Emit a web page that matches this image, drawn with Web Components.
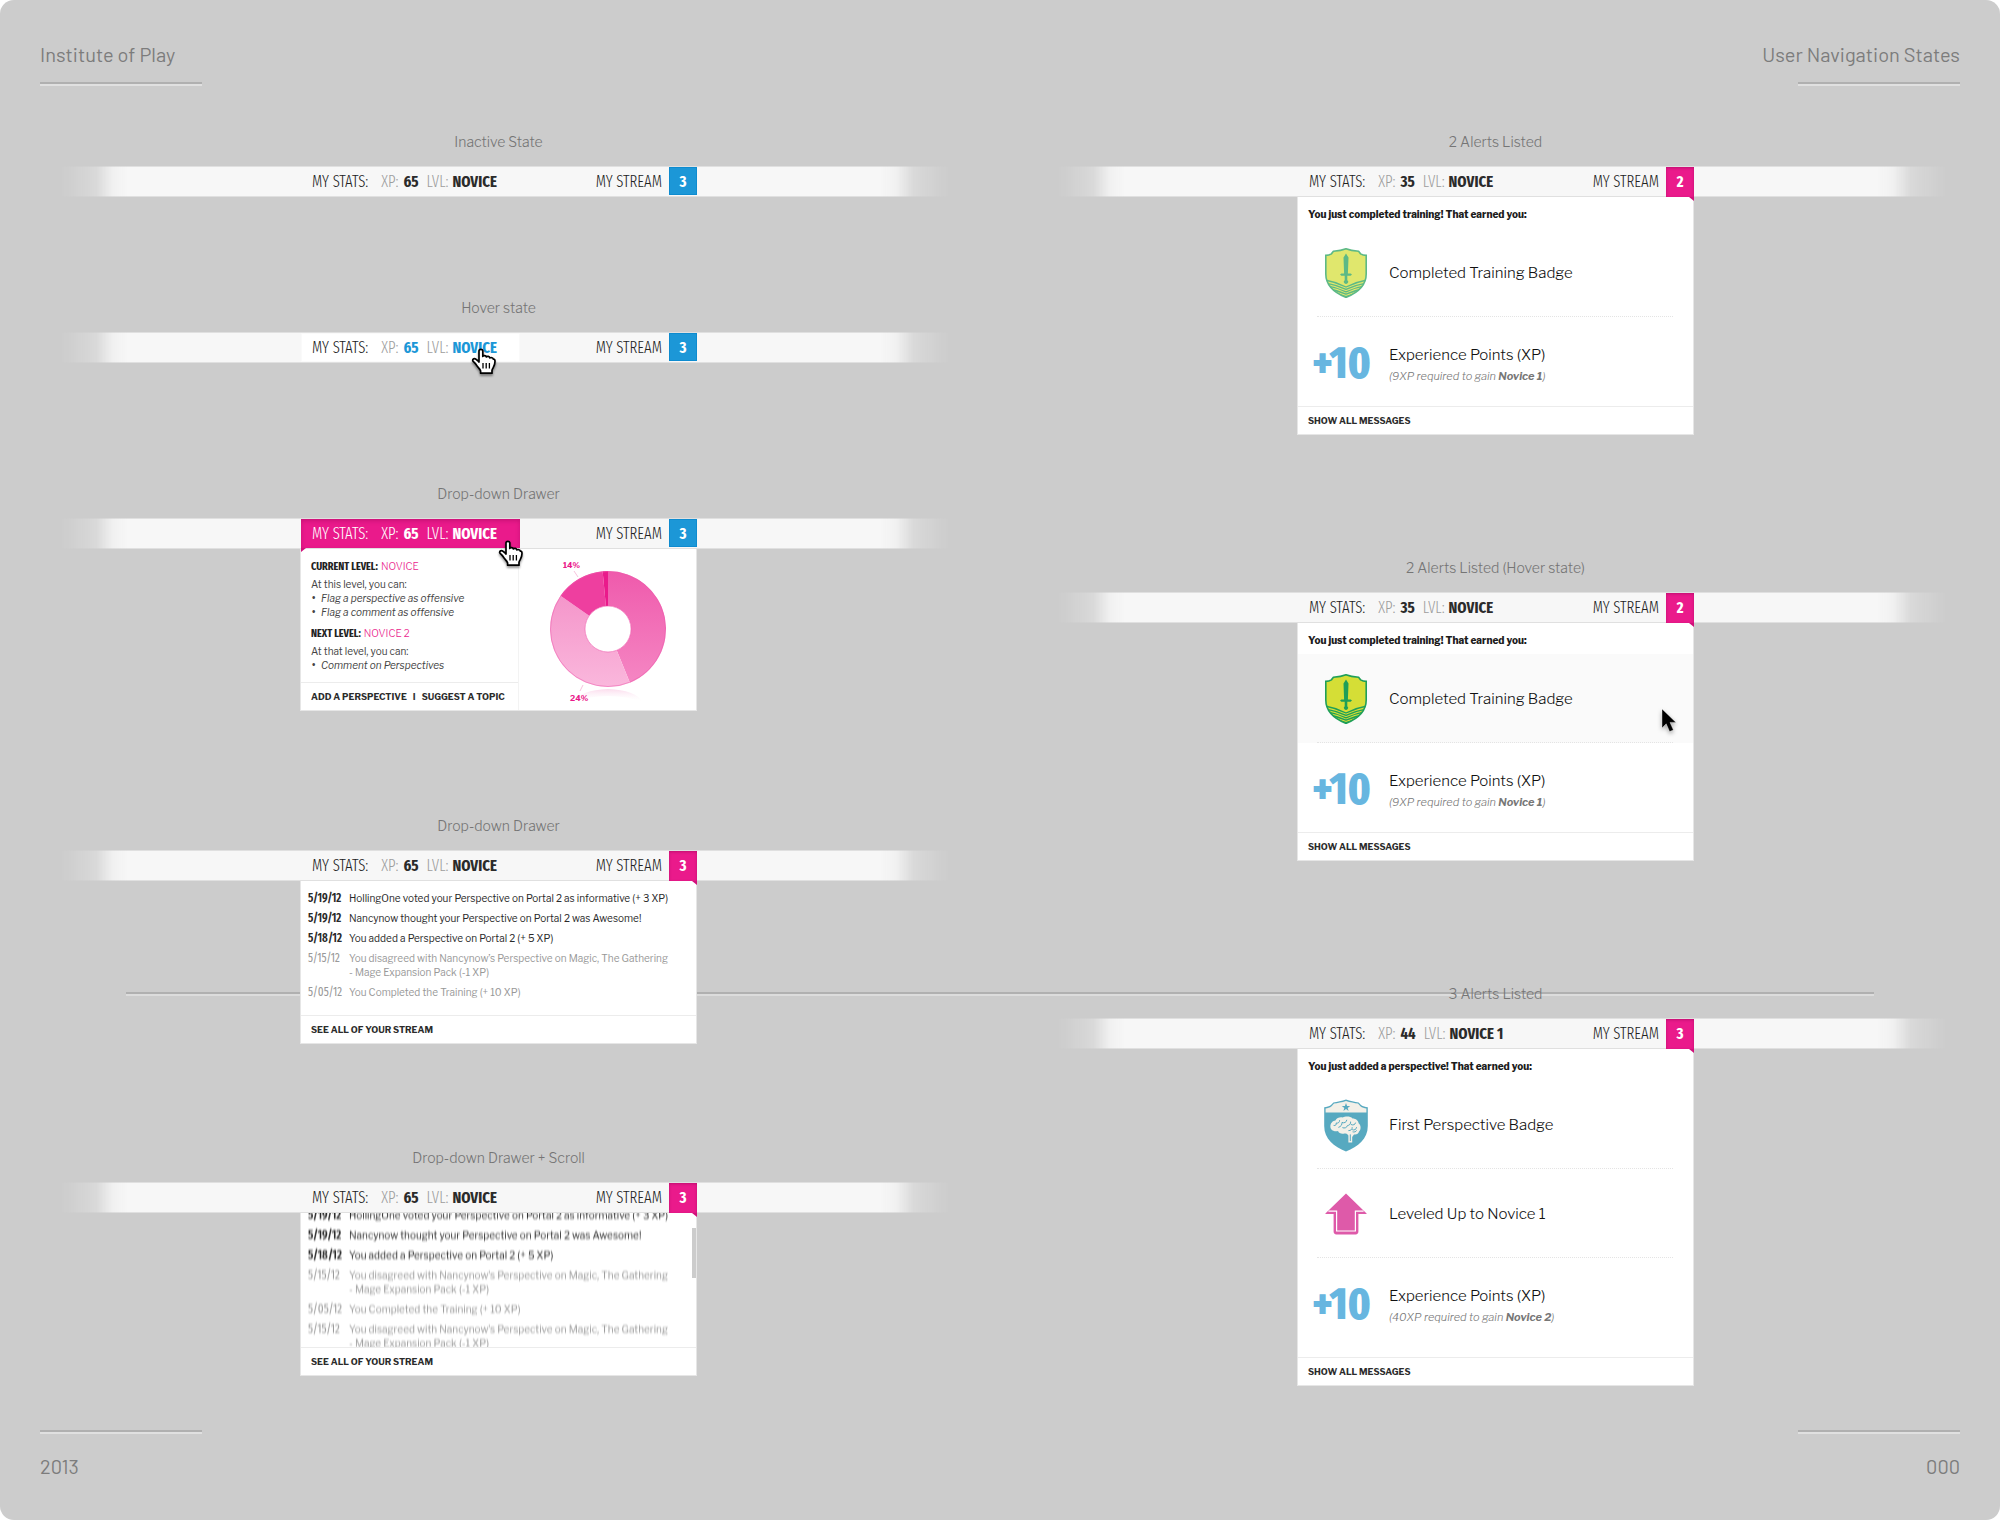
<!DOCTYPE html>
<html lang="en">
<head>
<meta charset="utf-8">
<meta name="viewport" content="width=device-width, initial-scale=1">
<title>User Navigation States</title>
<style>
  html { background: #fff; }
  body {
    margin: 0;
    --body-font: "Libre Franklin", "Liberation Sans", sans-serif;
    --narrow-font: "Fira Sans Extra Condensed", "Open Sans Condensed", "Liberation Sans", sans-serif;
    --din-font: Barlow, Roboto, sans-serif;
    --pink: #ea1a8b;
    --blue: #1c97d7;
    font-family: var(--body-font);
    color: #333;
  }
  b { font-weight: 700; }
</style>
</head>
<body>
<spec-sheet>
  <span slot="project">Institute of Play</span>
  <span slot="title">User Navigation States</span>
  <span slot="year">2013</span>
  <span slot="page">000</span>

  <state-column slot="left" style="--rows: 166px 186px 332px 332px auto">
    <nav-state label="Inactive State">
      <user-nav xp="65" level="NOVICE" count="3"></user-nav>
    </nav-state>
    <nav-state label="Hover state">
      <user-nav xp="65" level="NOVICE" count="3" stats="hover"></user-nav>
    </nav-state>
    <nav-state label="Drop-down Drawer">
      <user-nav xp="65" level="NOVICE" count="3" stats="open"></user-nav>
      <stats-drawer slot="drawer"></stats-drawer>
    </nav-state>
    <nav-state label="Drop-down Drawer">
      <user-nav xp="65" level="NOVICE" count="3" stream="open"></user-nav>
      <nav-drawer slot="drawer" action="SEE ALL OF YOUR STREAM">
        <stream-list></stream-list>
      </nav-drawer>
    </nav-state>
    <nav-state label="Drop-down Drawer + Scroll">
      <user-nav xp="65" level="NOVICE" count="3" stream="open"></user-nav>
      <nav-drawer slot="drawer" action="SEE ALL OF YOUR STREAM">
        <stream-list scrolling></stream-list>
      </nav-drawer>
    </nav-state>
  </state-column>

  <state-column slot="right" style="--rows: 426px 426px auto">
    <nav-state label="2 Alerts Listed">
      <user-nav xp="35" level="NOVICE" count="2" stream="open"></user-nav>
      <nav-drawer slot="drawer" action="SHOW ALL MESSAGES" heading="You just completed training! That earned you:">
        <alert-row icon="sword">Completed Training Badge</alert-row>
        <alert-row icon="points">Experience Points (XP)<span slot="note">(9XP required to gain <b>Novice 1</b>)</span></alert-row>
      </nav-drawer>
    </nav-state>
    <nav-state label="2 Alerts Listed (Hover state)">
      <user-nav xp="35" level="NOVICE" count="2" stream="open"></user-nav>
      <nav-drawer slot="drawer" action="SHOW ALL MESSAGES" heading="You just completed training! That earned you:">
        <alert-row icon="sword" hovered>Completed Training Badge</alert-row>
        <alert-row icon="points">Experience Points (XP)<span slot="note">(9XP required to gain <b>Novice 1</b>)</span></alert-row>
      </nav-drawer>
    </nav-state>
    <nav-state label="3 Alerts Listed">
      <user-nav xp="44" level="NOVICE 1" count="3" stream="open"></user-nav>
      <nav-drawer slot="drawer" roomy action="SHOW ALL MESSAGES" heading="You just added a perspective! That earned you:">
        <alert-row icon="brain">First Perspective Badge</alert-row>
        <alert-row icon="levelup">Leveled Up to Novice 1</alert-row>
        <alert-row icon="points">Experience Points (XP)<span slot="note">(40XP required to gain <b>Novice 2</b>)</span></alert-row>
      </nav-drawer>
    </nav-state>
  </state-column>
</spec-sheet>

<script>
const shadow = (el, html) => { el.attachShadow({ mode: 'open' }).innerHTML = html; };

const HAND = `<svg width="26" height="28" viewBox="0 0 26 28" aria-hidden="true">
  <path d="M8 2.6C8.2 .9 11.6 .9 11.8 2.6V8.4C12.4 7.2 15 7.2 15.4 9C16.2 7.9 18.4 8.2 18.9 9.9C20 9.2 22 9.6 22.4 11.2C23.6 10.9 24 12.2 24 13.6C24 18.4 21.4 20 21 22.4V25.2H9.6V22.8C8.6 20.6 6.6 19.2 5.2 16.8C4 14.8 2.4 14 1.7 12.6C1.4 10.9 3.4 10.2 5 11.2C6.4 12 7.2 13.4 8 14Z" fill="#fff" stroke="#000" stroke-width="1.7" stroke-linejoin="round"/>
  <path d="M12 15V20.5M15.2 15V20.5M18.4 15V20.5" stroke="#000" stroke-width="1.3" fill="none"/></svg>`;
const ARROW = `<svg width="16" height="26" viewBox="0 0 16 26" aria-hidden="true">
  <path d="M1 1V20L5.2 15.8L8.6 23.6L12.4 22L9 14.4H15Z" fill="#000" stroke="#fff" stroke-opacity=".6" stroke-width=".6"/></svg>`;

const SHIELD = 'M21 .8C25 2.4 30 3 33.6 3.2L35.6 5.8C37.4 7 39.4 7.4 41.2 7.4V26C41.2 38 32 45 21 49.4C10 45 .8 38 .8 26V7.4C2.6 7.4 4.6 7 6.4 5.8L8.4 3.2C12 3 17 2.4 21 .8Z';
const ICONS = {
  sword: `<svg width="42" height="50" viewBox="0 0 42 50" role="img" aria-label="Sword shield">
    <clipPath id="c"><path d="${SHIELD}"/></clipPath>
    <path d="${SHIELD}" fill="#d5de36"/>
    <g clip-path="url(#c)" fill="none" stroke="#1f9f58" stroke-width="1.3">
      <path d="M0 32C8 33.4 15 36 21 39C27 36 34 33.4 42 32"/>
      <path d="M0 34.8C8 36.2 15 38.6 21 41.4C27 38.6 34 36.2 42 34.8"/>
      <path d="M0 37.4C8 38.8 15 41 21 43.8C27 41 34 38.8 42 37.4"/>
      <path d="M0 40C8 41.4 15 43.6 21 46.2C27 43.6 34 41.4 42 40"/>
      <path d="M0 42.6C8 44 15 46.2 21 48.6C27 46.2 34 44 42 42.6"/>
    </g>
    <path d="${SHIELD}" fill="none" stroke="#1f9f58" stroke-width="1.6"/>
    <path d="M21 5.6L23.5 9.4L22.9 25.4H25.6L27 26.6L25.6 27.8H22.3V32.2A2.1 2.1 0 1 1 19.7 32.2V27.8H16.4L15 26.6L16.4 25.4H19.1L18.5 9.4Z" fill="#1f9f58"/>
  </svg>`,
  brain: `<svg width="44" height="53" viewBox="0 0 44 53" role="img" aria-label="Brain shield">
    <path d="M22 .4C26 2 31 2.6 34.6 3.4L37 6C39 7.6 41.4 8 43.8 8.2V27C43.8 40 34 47.6 22 52.6C10 47.6 .2 40 .2 27V8.2C2.6 8 5 7.6 7 6L9.4 3.4C13 2.6 18 2 22 .4Z" fill="#57a9c0"/>
    <path d="M22 2C26 3.4 30.6 4 34 4.6L36.4 7.2C38.2 8.6 40.4 9.2 42.4 9.4V13.4H1.6V9.4C3.6 9.2 5.8 8.6 7.6 7.2L10 4.6C13.4 4 18 3.4 22 2Z" fill="#f3f0e8"/>
    <path d="M22 3.9L23.1 6.9L26.2 7L23.7 8.9L24.6 11.9L22 10.1L19.4 11.9L20.3 8.9L17.8 7L20.9 6.9Z" fill="#57a9c0"/>
    <path d="M6.4 28C6 24 9 21.6 11.4 21.4C12.6 18.8 16.4 17.8 18.8 18.6C21.4 17 26.4 17.2 28.6 19.4C32 19.4 34.4 21.6 34.6 24.2C37 26 37.4 30.4 35 32.6C34.6 35 32 36 30 35.4L28.2 38V43.4H24.4V36.6C23.4 34.6 22 34.4 20.4 34.4C18 35.4 14.8 34.2 14 32C10.4 32.8 6.6 31.4 6.4 28Z" fill="#f3f0e8"/>
    <path d="M9.6 26.4C11.6 27 12.6 25.6 12.2 24M12.2 24C14.2 24.6 15.8 23 15.6 21.2M14.4 28.4C17 27.6 18.2 25.6 18 23.4C20 24.4 22.6 23.4 22.8 20.8M18.4 28.6C20.4 29.6 23 28.6 23.4 26.6C25.4 26.4 27 24.8 26.6 22.6M26.8 25.4C28.8 26.6 31.4 25.6 31.6 23.6M24.4 31.6C26.8 31.8 28.4 30.2 28.2 28.2M28.2 30.6C30 31.6 32.4 30.4 32.6 28.2M32.6 31.4C32 33 30 33.2 28.6 32.8M26.3 42V35.4" fill="none" stroke="#57a9c0" stroke-width="1"/>
  </svg>`,
  levelup: `<svg width="42" height="42" viewBox="0 0 42 42" role="img" aria-label="Level up arrow">
    <path d="M21 .4L41.6 20.4V21H33.4V38.6Q33.4 41.4 30.6 41.4H11.4Q8.6 41.4 8.6 38.6V21H.4V20.4Z" fill="#de5aa9"/>
    <path d="M3.4 18.2H11.6V38H30.4V18.2H38.6" fill="none" stroke="#fff" stroke-width="1.2"/>
  </svg>`,
  points: `<strong>+10</strong>`
};

/* The whole sheet: running heads, two columns of states, running feet. */
customElements.define('spec-sheet', class extends HTMLElement {
  constructor() {
    super();
    shadow(this, `<style>
      :host { display: flex; flex-direction: column; min-height: 100vh; box-sizing: border-box;
        background: #ccc; border-radius: 14px; }
      header, footer { display: flex; justify-content: space-between; padding: 42px 40px 0;
        font: 400 20px/24px var(--din-font); color: #7c7c7c; }
      footer { margin-top: auto; padding: 0 40px 42px; }
      header > div, footer > div { display: flex; flex-direction: column; gap: 16px; align-items: flex-start; }
      footer > div { flex-direction: column-reverse; gap: 20px; }
      div.end { align-items: flex-end; }
      h1, p { margin: 0; font: inherit; }
      .rule { width: 162px; height: 2px; background: #b0b0b0; border-bottom: 2px solid #e0e0e0; }
      main { position: relative; display: grid; grid-template-columns: 1fr 1fr; padding: 46px 6px 0 0; }
      .middle { position: absolute; top: 906px; left: 126px; right: 126px; height: 2px;
        background: #b0b0b0; border-bottom: 2px solid #dcdcdc; }
      ::slotted(state-column) { position: relative; }
    </style>
    <header>
      <div><p><slot name="project"></slot></p><div class="rule"></div></div>
      <div class="end"><h1><slot name="title"></slot></h1><div class="rule"></div></div>
    </header>
    <main><div class="middle"></div><slot name="left"></slot><slot name="right"></slot></main>
    <footer>
      <div><p><slot name="year"></slot></p><div class="rule"></div></div>
      <div class="end"><p><slot name="page"></slot></p><div class="rule"></div></div>
    </footer>`);
  }
});

customElements.define('state-column', class extends HTMLElement {
  constructor() {
    super();
    shadow(this, `<style>
      :host { display: grid; grid-template-rows: var(--rows); align-content: start; }
    </style><slot></slot>`);
  }
});

/* A captioned state: the page-wide strip with the navigation and its drawer. */
customElements.define('nav-state', class extends HTMLElement {
  constructor() {
    super();
    shadow(this, `<style>
      :host { display: block; }
      h2 { margin: 0 0 14px; text-align: center; font: 300 14px/20px var(--body-font); color: #757575; }
      .strip { display: grid; justify-content: center; height: 31px; position: relative; }
      .strip::before { content: ""; position: absolute; inset: 0; box-sizing: border-box;
        background: #f7f7f7; border: solid #e0e0e0; border-width: 1px 0;
        mask-image: linear-gradient(90deg, transparent 60px, rgb(0 0 0 / .3) 96px, rgb(0 0 0 / .85) 113px, #000 128px,
          #000 calc(100% - 118px), rgb(0 0 0 / .85) calc(100% - 101px), rgb(0 0 0 / .3) calc(100% - 83px), transparent calc(100% - 47px)); }
      .drawer { display: grid; justify-content: center; }
    </style>
    <h2></h2><div class="strip"><slot></slot></div><div class="drawer"><slot name="drawer"></slot></div>`);
  }
  connectedCallback() { this.shadowRoot.querySelector('h2').textContent = this.getAttribute('label'); }
});

customElements.define('user-nav', class extends HTMLElement {
  connectedCallback() {
    if (this.shadowRoot) return;
    const a = n => this.getAttribute(n) || '';
    shadow(this, `<style>
      :host { display: flex; justify-content: space-between; width: 397px; position: relative; z-index: 1; }
      button { position: relative; display: flex; align-items: center; margin: 0; padding: 0; border: 0;
        background: none; font: 300 16px/31px var(--narrow-font); color: #222; }
      b { font-weight: 700; color: #2b2b2b; }
      .stats { width: 219px; margin: 1px; padding-left: 11px; line-height: 29px; }
      .stats i { font-style: normal; color: #9d9d9d; }
      .xp { margin: 0 5px 0 13px; }
      .lvl { margin: 0 4px 0 8px; }
      .stats.hover { background: #fff; box-shadow: inset 0 0 0 1px #fafafa; }
      .stats.hover b { color: var(--blue); }
      .stats.open { background: var(--pink); box-shadow: inset 0 2px 4px rgb(140 0 80 / .35); }
      .stats.open, .stats.open i, .stats.open b { color: #fff; }
      .stream { gap: 7px; align-items: flex-start; }
      .count { position: relative; width: 28px; height: 28px; margin-top: 1px; line-height: 29px;
        background: var(--blue); box-shadow: inset 0 0 0 1px #0e8bcf; color: #fff; font-weight: 700; text-align: center; }
      .stream.open .count { height: 30px; background: var(--pink); box-shadow: inset 0 1px 3px rgb(140 0 80 / .45); }
      .open.stats::after, .open .count::after { content: ""; position: absolute; top: 100%; width: 5px; height: 4px; background: #d0107a; }
      .open.stats::after { left: 0; clip-path: polygon(0 0, 100% 0, 0 100%); }
      .open .count::after { right: 0; clip-path: polygon(0 0, 100% 0, 100% 100%); }
      .hand { position: absolute; top: 16px; left: 171px; filter: drop-shadow(0 2px 1px rgb(0 0 0 / .4)); }
      .hand svg { display: block; }
      .hand.low { top: 22px; left: 198px; }
    </style>
    <button type="button" class="stats ${a('stats')}">MY STATS:<i class="xp">XP:</i><b>${a('xp')}</b><i class="lvl">LVL:</i><b>${a('level')}</b></button>
    <button type="button" class="stream ${a('stream')}">MY STREAM<span class="count">${a('count')}</span></button>
    ${a('stats') ? `<span class="hand ${a('stats') === 'open' ? 'low' : ''}">${HAND}</span>` : ''}`);
  }
});

/* White panel below the strip, with an optional heading and one link at its foot. */
customElements.define('nav-drawer', class extends HTMLElement {
  connectedCallback() {
    if (this.shadowRoot) return;
    const h = this.getAttribute('heading');
    shadow(this, `<style>
      :host { display: block; box-sizing: border-box; width: 397px; background: #fff;
        border: solid #e6e6e6; border-width: 0 1px 1px; }
      h3 { margin: 0; padding: 7px 10px 4px; font: 800 10px/20px var(--body-font); color: #1c1c1c; }
      :host([roomy]) .body { padding-bottom: 10px; }
      footer { padding: 0 10px; border-top: 1px solid #ececec; font: 700 9px/27px var(--body-font); }
      a { color: #2b2b2b; text-decoration: none; }
    </style>
    ${h ? `<h3>${h}</h3>` : ''}
    <div class="body"><slot></slot></div>
    <footer><a href="#all">${this.getAttribute('action')}</a></footer>`);
  }
});

customElements.define('stream-list', class extends HTMLElement {
  connectedCallback() {
    if (this.shadowRoot) return;
    const scrolling = this.hasAttribute('scrolling');
    const rows = [
      ['5/19/12', 'HollingOne voted your Perspective on Portal 2 as informative (+ 3 XP)', 1],
      ['5/19/12', 'Nancynow thought your Perspective on Portal 2 was Awesome!', 1],
      ['5/18/12', 'You added a Perspective on Portal 2 (+ 5 XP)', 1],
      ['5/15/12', 'You disagreed with Nancynow’s Perspective on Magic, The Gathering<br>- Mage Expansion Pack (-1 XP)', 0],
      ['5/05/12', 'You Completed the Training (+ 10 XP)', 0]
    ];
    if (scrolling) rows.push(rows[3]);
    shadow(this, `<style>
      :host { display: block; position: relative; }
      ul { display: flex; flex-direction: column; gap: 6px; height: 134px; margin: 0; padding: 10px 7px 0;
        box-sizing: border-box; overflow: hidden; list-style: none; font: 400 10px/14px var(--body-font); color: #999; }
      li { display: grid; grid-template-columns: 34px 1fr; gap: 7px; flex: none; white-space: nowrap; }
      .new { color: #2a2a2a; }
      time { font: 400 12px/14px var(--narrow-font); }
      .new time { font-weight: 600; }
      :host([scrolling]) li { filter: url(#motion); }
      .thumb { position: absolute; top: 15px; right: 0; width: 4px; height: 50px; background: #ccc; }
      svg { position: absolute; width: 0; height: 0; }
    </style>
    <svg aria-hidden="true"><filter id="motion" x="0" y="-20%" width="100%" height="140%"><feGaussianBlur stdDeviation="0 1.2"/></filter></svg>
    <ul>${rows.map(r => `<li class="${r[2] ? 'new' : 'old'}"><time>${r[0]}</time><span>${r[1]}</span></li>`).join('')}</ul>
    ${scrolling ? '<div class="thumb"></div>' : ''}`);
    if (scrolling) this.shadowRoot.querySelector('ul').scrollTop = 15;
  }
});

customElements.define('alert-row', class extends HTMLElement {
  connectedCallback() {
    if (this.shadowRoot) return;
    const over = this.hasAttribute('hovered');
    shadow(this, `<style>
      :host { display: block; position: relative; }
      :host([hovered]) { background: #fafafa; }
      .row { display: flex; align-items: center; gap: 14px; box-sizing: border-box; height: 89px; padding-top: 2px;
        margin: 0 20px 0 19px; border-bottom: 1px dotted #e4e4e4; }
      :host(:last-child) .row { border-bottom-color: transparent; }
      .icon { flex: none; display: grid; place-items: center; width: 58px; }
      svg { display: block; }
      :host([icon=sword]:not([hovered])) .icon { opacity: .72; }
      :host([icon=points]) .row { padding-top: 4px; }
      :host([icon=points]) .icon { justify-content: end; padding-right: 4px; width: 54px; }
      :host([icon=points]) .text { padding-top: 4px; }
      strong { font: 800 45px/44px var(--narrow-font); color: #67b6e0; }
      .text { font: 300 15px/22px var(--body-font); color: #111; }
      ::slotted(span) { display: block; font-size: 11px; font-weight: 300; line-height: 20px; font-style: italic; color: #777; }
      .pointer { position: absolute; left: 363px; top: 54px; filter: drop-shadow(0 2px 2px rgb(0 0 0 / .35)); }
    </style>
    <div class="row"><div class="icon">${ICONS[this.getAttribute('icon')]}</div>
      <div class="text"><slot></slot><slot name="note"></slot></div></div>
    ${over ? `<span class="pointer">${ARROW}</span>` : ''}`);
  }
});

customElements.define('stats-drawer', class extends HTMLElement {
  constructor() {
    super();
    const cx = 89, cy = 80, R = 58, r = 23;
    const pt = (rad, deg) => { const t = deg * Math.PI / 180; return (cx + rad * Math.sin(t)).toFixed(2) + ' ' + (cy - rad * Math.cos(t)).toFixed(2); };
    const seg = (a, b, fill) => `<path d="M${pt(R, a)}A${R} ${R} 0 ${b - a > 180 ? 1 : 0} 1 ${pt(R, b)}L${pt(r, b)}A${r} ${r} 0 ${b - a > 180 ? 1 : 0} 0 ${pt(r, a)}Z" fill="${fill}"/>`;
    shadow(this, `<style>
      :host { display: flex; box-sizing: border-box; width: 397px; background: #fff; border: solid #e6e6e6; border-width: 0 1px 1px; }
      .info { display: flex; flex-direction: column; width: 217px; border-right: 1px solid #f3f3f3; }
      .levels { flex: 1; padding: 10px 10px 0; font: 400 10px/14px var(--body-font); color: #444; }
      h3 { display: flex; align-items: baseline; gap: 3px; height: 14px; margin: 0 0 4px; font: 700 11px/14px var(--narrow-font); color: #222; }
      h3 span { font: 300 10px/14px var(--body-font); color: var(--pink); }
      ul + h3 { margin-top: 7px; }
      p, ul { margin: 0; padding: 0; list-style: none; }
      li { font-style: italic; }
      li::before { content: "•"; display: inline-block; width: 10px; font-style: normal; font-weight: 700; text-indent: 1px; }
      footer { display: flex; gap: 6px; padding: 0 10px; white-space: nowrap; border-top: 1px solid #ececec; font: 700 9px/27px var(--body-font); }
      a { color: #2b2b2b; text-decoration: none; }
      svg { display: block; }
      text { font: 700 8px var(--body-font); fill: #ea1a8b; }
    </style>
    <div class="info">
      <div class="levels">
        <h3>CURRENT LEVEL: <span>NOVICE</span></h3>
        <p>At this level, you can:</p>
        <ul><li>Flag a perspective as offensive</li><li>Flag a comment as offensive</li></ul>
        <h3>NEXT LEVEL: <span>NOVICE 2</span></h3>
        <p>At that level, you can:</p>
        <ul><li>Comment on Perspectives</li></ul>
      </div>
      <footer><a href="#add">ADD A PERSPECTIVE</a><span>I</span><a href="#suggest">SUGGEST A TOPIC</a></footer>
    </div>
    <svg width="177" height="161" viewBox="0 0 177 161" role="img" aria-label="Level breakdown">
      <defs>
        <linearGradient id="a" gradientUnits="userSpaceOnUse" x1="0" y1="22" x2="0" y2="138"><stop offset="0" stop-color="#ef5aac"/><stop offset="1" stop-color="#f588c4"/></linearGradient>
        <linearGradient id="b" gradientUnits="userSpaceOnUse" x1="0" y1="50" x2="0" y2="138"><stop offset="0" stop-color="#f597cb"/><stop offset="1" stop-color="#fab7dc"/></linearGradient>
        <linearGradient id="m" gradientUnits="userSpaceOnUse" x1="0" y1="139" x2="0" y2="153"><stop offset="0" stop-color="#f9c4e1" stop-opacity=".7"/><stop offset="1" stop-color="#fff" stop-opacity="0"/></linearGradient>
      </defs>
      ${seg(0, 157.8, 'url(#a)')}${seg(157.8, 305, 'url(#b)')}${seg(305, 354.7, '#ee3f9f')}${seg(354.7, 360, '#ea1a8b')}
      <circle cx="${cx}" cy="${cy}" r="57.5" fill="none" stroke="#ee5aab" stroke-opacity=".5"/>
      <circle cx="${cx}" cy="${cy}" r="23" fill="#fff" stroke="#ee5aab" stroke-opacity=".6"/>
      <path d="M54 153Q62 141 89 140Q116 141 124 153Q108 147 89 147Q70 147 54 153Z" fill="url(#m)"/>
      <path d="M55 22L59 28M64 136L61 142" stroke="#f7c3dd" stroke-width="1"/>
      <text x="44" y="19">14%</text><text x="51" y="152">24%</text>
    </svg>`);
  }
});
</script>
</body>
</html>
